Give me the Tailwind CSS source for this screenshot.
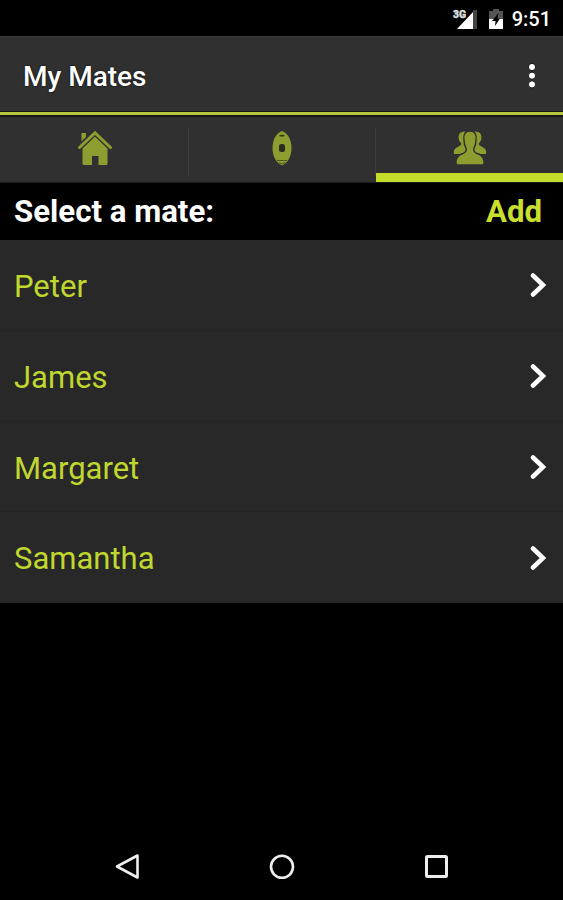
<!DOCTYPE html>
<html lang="en">
<head>
  <meta charset="UTF-8" />
  <meta name="viewport" content="width=device-width, initial-scale=1.0" />
  <title>My Mates</title>
  <script src="https://cdn.jsdelivr.net/npm/@tailwindcss/browser@4"></script>
</head>
<body class="bg-black">
  <div class="flex h-[900px] w-[563px] flex-col overflow-hidden bg-black font-['Roboto',sans-serif] text-white">

    <!-- Status bar -->
    <div class="flex h-9 shrink-0 items-center justify-end pt-px pr-3">
      <svg class="mr-[11px] h-6 w-7" viewBox="0 0 28 24">
        <path d="M24 3V22H28V3Z" fill="#444" />
        <path d="M8 22 24 5V22Z" fill="#fff" />
        <text x="4" y="11" font-size="11" font-weight="900" fill="#ddd" stroke="#ddd" stroke-width=".4" textLength="13" lengthAdjust="spacingAndGlyphs">3G</text>
      </svg>
      <svg class="mr-[8px] h-6 w-4" viewBox="0 0 16 24">
        <path d="M1 4H5V2H11V4H15V12H1Z" fill="#555" />
        <path d="M1 12H15V22H1Z" fill="#fff" />
        <path d="M10.500 6 4 14H7.500L7 19 12 11.500H9.500Z" fill="#000" />
      </svg>
      <span class="text-[20px] leading-9 font-medium">9:51</span>
    </div>

    <!-- App bar -->
    <div class="flex h-[75px] shrink-0 items-center justify-between border-t border-[#383838] bg-[#303030] pt-[6px] pr-[26px] pl-[23px]">
      <h1 class="text-[28px] font-medium [text-shadow:0_0_2px_#000]">My Mates</h1>
      <svg class="h-8 w-[10px]" viewBox="0 0 10 32">
        <g fill="#fff" stroke="#111" stroke-width="1">
          <circle cx="5" cy="6" r="3.600" />
          <circle cx="5" cy="14.700" r="3.600" />
          <circle cx="5" cy="23.400" r="3.600" />
        </g>
      </svg>
    </div>
    <div class="h-[6px] shrink-0 border-t border-b-2 border-[#151515] bg-[#b3c63c]"></div>

    <!-- Tabs -->
    <div class="grid h-[66px] shrink-0 grid-cols-[189px_187px_187px] border-b border-[#1c1c1c] bg-[#303030]">
      <div class="flex items-start justify-between pt-[13px]">
        <span></span>
        <svg class="ml-[2px] h-9 w-9" viewBox="0 0 36 36">
          <g fill="#8e9c30">
            <path d="M4.500 3H9V7L4.500 11.500Z" />
            <path d="M5.500 18 18 6 30.500 18V33.500Q30.500 35 29 35H21.500V26H15V35H7Q5.500 35 5.500 33.500Z" />
          </g>
          <path d="M2.500 17.500 18 2.800 33.500 17.500" fill="none" stroke="#303030" stroke-width="5.500" />
          <path d="M2.500 17.500 18 2.800 33.500 17.500" fill="none" stroke="#8e9c30" stroke-width="3" stroke-linecap="round" />
        </svg>
        <span class="-mt-[3px] h-[48px] w-px bg-[#3c3c3c]"></span>
      </div>
      <div class="flex items-start justify-between pt-[13px]">
        <span></span>
        <svg class="h-9 w-5" viewBox="0 0 20 36">
          <path d="M10 1C16 3 19.500 10 19.500 18S16 33 10 35.500C4 33 .5 26 .5 18S4 3 10 1Z" fill="#8e9c30" />
          <path d="M7 5.500Q10 3.800 13 5.500L12 6.500H8Z" fill="#333819" />
          <rect x="7" y="14" width="6" height="8" rx="2.500" fill="#292d1d" />
          <path d="M5 30.500H15M7 32.500 10 34 13 32.500" fill="none" stroke="#3d421f" stroke-width=".8" />
        </svg>
        <span class="-mt-[3px] h-[48px] w-px bg-[#3c3c3c]"></span>
      </div>
      <div class="flex flex-col items-center justify-between pt-[13px]">
        <svg class="h-9 w-9" viewBox="0 0 36 36">
          <g fill="#8e9c30">
            <path d="M8 3Q11 .5 15 2L12 10L15 24H2Q1 20 4 18L9 15Q10 13 8 12Q5 7 8 3Z" />
            <path d="M28 3Q25 .5 21 2L24 10L21 24H34Q35 20 32 18L27 15Q26 13 28 12Q31 7 28 3Z" />
            <path d="M18 1C23 1 25 5 24 10Q24 15 22 18Q21 22 25 23.500Q31 25 32 31Q32.500 35 30 35H6Q3.500 35 4 31Q5 25 11 23.500Q15 22 14 18Q12 15 12 10C11 5 13 1 18 1Z" stroke="#303030" stroke-width="1.400" />
          </g>
        </svg>
        <div class="h-[9px] w-full bg-[#c5db29]"></div>
      </div>
    </div>

    <!-- List heading -->
    <div class="flex h-[57px] shrink-0 items-center justify-between pt-[2px] pr-[21px] pl-[14px] text-[31.200px] font-bold">
      <h2>Select a mate:</h2>
      <button class="text-[#c8df2e]">Add</button>
    </div>

    <!-- Mates -->
    <ul class="flex h-[363px] shrink-0 flex-col bg-[#282828] text-[31px] text-[#c0d72f] [&>li]:flex [&>li]:flex-1 [&>li]:items-center [&>li]:justify-between [&>li]:border-b [&>li]:border-[#242424] [&>li]:pt-[5px] [&>li]:pr-4 [&>li]:pl-[14px]">
      <li>Peter
        <svg class="h-7 w-[18px]" viewBox="0 0 18 28"><path d="M4 2.500 14 12 4 21.500" fill="none" stroke="#fff" stroke-width="4.500" stroke-linecap="round" /></svg>
      </li>
      <li>James
        <svg class="h-7 w-[18px]" viewBox="0 0 18 28"><path d="M4 2.500 14 12 4 21.500" fill="none" stroke="#fff" stroke-width="4.500" stroke-linecap="round" /></svg>
      </li>
      <li>Margaret
        <svg class="h-7 w-[18px]" viewBox="0 0 18 28"><path d="M4 2.500 14 12 4 21.500" fill="none" stroke="#fff" stroke-width="4.500" stroke-linecap="round" /></svg>
      </li>
      <li>Samantha
        <svg class="h-7 w-[18px]" viewBox="0 0 18 28"><path d="M4 2.500 14 12 4 21.500" fill="none" stroke="#fff" stroke-width="4.500" stroke-linecap="round" /></svg>
      </li>
    </ul>

    <!-- Navigation bar -->
    <div class="mt-auto flex h-[66px] shrink-0 items-center justify-between pr-[112px] pl-[113px]">
      <svg class="h-7 w-7" viewBox="0 0 28 28"><path d="M24.500 2.500V24.500L4 13.500Z" fill="none" stroke="#eee" stroke-width="2.600" stroke-linejoin="round" /></svg>
      <svg class="h-7 w-7" viewBox="0 0 28 28"><circle cx="14" cy="13.800" r="11" fill="none" stroke="#eee" stroke-width="2.600" /></svg>
      <svg class="h-7 w-7" viewBox="0 0 28 28"><rect x="3.500" y="3.500" width="20" height="20" rx="1" fill="none" stroke="#eee" stroke-width="3" /></svg>
    </div>
  </div>
</body>
</html>
